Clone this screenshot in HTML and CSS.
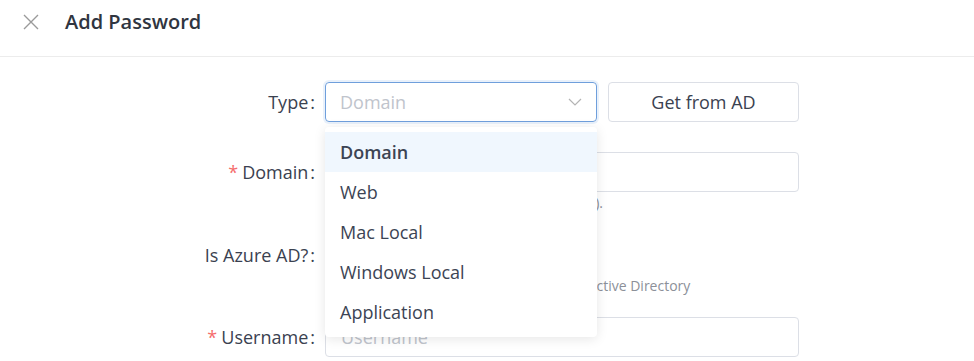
FILE: index.html
```html
<!DOCTYPE html>
<html lang="en">
<head>
<meta charset="utf-8">
<title>Add Password</title>
<link rel="stylesheet" href="styles.css">
</head>
<body>
<header class="header">
  <button class="close" aria-label="Close">
    <svg width="16" height="16" viewBox="0 0 16 16"><path d="M1 1 L15 15 M15 1 L1 15" stroke="#9a9a9a" stroke-width="1.4" fill="none"/></svg>
  </button>
  <h1 class="title">Add Password</h1>
</header>
<main class="form">
  <div class="item item-type">
    <label class="label">Type<span class="colon">:</span></label>
    <div class="control control-row">
      <div class="select">
        <div class="select-box">
          <span class="placeholder">Domain</span>
          <svg class="chev" width="14" height="8" viewBox="0 0 14 8"><path d="M1 1 L7 7 L13 1" stroke="#b4b4b4" stroke-width="1.2" fill="none"/></svg>
        </div>
        <ul class="dropdown">
          <li class="opt active">Domain</li>
          <li class="opt">Web</li>
          <li class="opt">Mac Local</li>
          <li class="opt">Windows Local</li>
          <li class="opt">Application</li>
        </ul>
      </div>
      <button class="btn">Get from AD</button>
    </div>
  </div>
  <div class="item item-domain">
    <label class="label"><span class="req">*</span>Domain<span class="colon">:</span></label>
    <div class="control">
      <div class="input"></div>
      <div class="hint">Enter the domain name (e.g. domain.com).</div>
    </div>
  </div>
  <div class="item item-azure">
    <label class="label">Is Azure AD?<span class="colon">:</span></label>
    <div class="control">
      <div class="switch-row"><span class="switch"></span></div>
      <div class="hint">Enable if the domain is hosted on Azure Active Directory</div>
    </div>
  </div>
  <div class="item">
    <label class="label"><span class="req">*</span>Username<span class="colon">:</span></label>
    <div class="control">
      <div class="input"><span class="placeholder">Username</span></div>
    </div>
  </div>
</main>
</body>
</html>
```

FILE: styles.css
```css
* { box-sizing: border-box; }
html, body { margin: 0; padding: 0; background: #fff; }
body {
  font-family: "Open Sans", "Noto Sans", sans-serif;
  color: #303540;
  width: 974px;
  height: 361px;
  overflow: hidden;
}
.header {
  height: 57px;
  border-bottom: 1px solid #ececec;
  display: flex;
  align-items: center;
  padding-left: 23px;
  padding-bottom: 13px;
}
.close {
  border: 0;
  background: none;
  padding: 0;
  width: 16px;
  height: 16px;
  display: flex;
  margin-right: 26px;
}
.title {
  margin: 0;
  font-size: 20px;
  font-weight: 600;
  color: #303540;
  line-height: 26px;
}
.form {
  padding-top: 25px;
}
.item {
  display: flex;
  align-items: flex-start;
}
.item-type { margin-bottom: 30px; }
.item-domain { margin-bottom: 21px; }
.item-azure { margin-bottom: 20px; }
.label {
  width: 325px;
  flex: none;
  text-align: right;
  padding-right: 10px;
  font-size: 18px;
  line-height: 40px;
  color: #3a4150;
}
.colon { margin-left: 2px; }
.req { color: #f56c6c; margin-right: 4px; }
.control { width: 474px; }
.control-row { display: flex; gap: 11px; }
.select { position: relative; width: 272px; flex: none; }
.select-box {
  height: 40px;
  border: 1px solid #6f9fdc;
  border-radius: 4px;
  box-shadow: 0 0 0 2px rgba(110, 160, 225, 0.15);
  display: flex;
  align-items: center;
  justify-content: space-between;
  padding: 0 14px 0 14px;
}
.placeholder { color: #c0c4cc; font-size: 18px; }
.chev { display: block; }
.dropdown {
  position: absolute;
  left: 0;
  top: 45px;
  width: 272px;
  margin: 0;
  padding: 5px 0;
  list-style: none;
  background: #fff;
  border-radius: 4px;
  box-shadow: 0 2px 12px rgba(0, 0, 0, 0.1);
  z-index: 10;
}
.opt {
  height: 40px;
  line-height: 40px;
  padding-left: 15px;
  font-size: 18px;
  color: #3c4454;
}
.opt.active { background: #f0f7fe; font-weight: 600; }
.btn {
  flex: none;
  width: 191px;
  height: 40px;
  border: 1px solid #dcdfe6;
  border-radius: 4px;
  background: #fff;
  font-family: inherit;
  font-size: 18px;
  color: #3a4150;
}
.input {
  height: 40px;
  border: 1px solid #dcdfe6;
  border-radius: 4px;
  display: flex;
  align-items: center;
  padding-left: 15px;
}
.hint {
  font-size: 14px;
  color: #8c9099;
  line-height: 22px;
}
.switch-row { height: 40px; display: flex; align-items: center; }
.switch { display: block; width: 40px; height: 20px; border-radius: 10px; background: #dcdfe6; }
```
